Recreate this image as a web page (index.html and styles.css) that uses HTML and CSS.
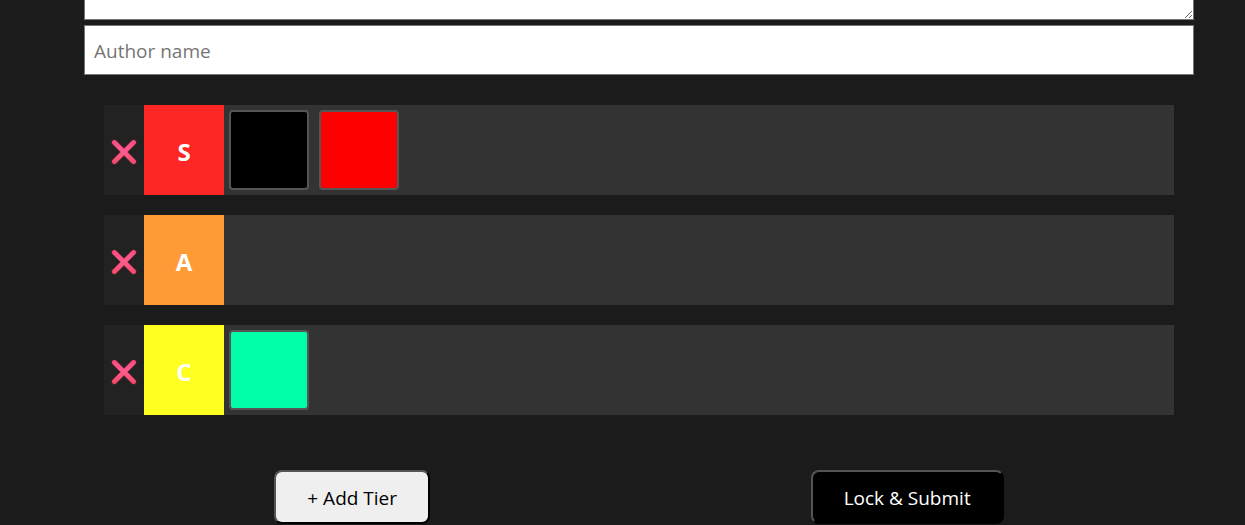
FILE: index.html
```html
<!DOCTYPE html>
<html lang="en">
<head>
<meta charset="utf-8">
<meta name="viewport" content="width=device-width, initial-scale=1">
<title>Tier list</title>
<link rel="stylesheet" href="styles.css">
</head>
<body>
<svg class="defs" aria-hidden="true">
  <defs>
    <linearGradient id="cross-fill" gradientUnits="userSpaceOnUse" x1="0" y1="0" x2="0" y2="26">
      <stop offset="0" stop-color="#f8497f"/>
      <stop offset="0.5" stop-color="#ff5c8d"/>
      <stop offset="1" stop-color="#f04860"/>
    </linearGradient>
    <symbol id="cross" viewBox="0 0 26 26">
      <path d="M3.4 3.4 22.6 22.6M22.6 3.4 3.4 22.6" fill="none" stroke="#c93a5e" stroke-width="5.2" stroke-linecap="round"/>
      <path d="M3.4 3.4 22.6 22.6M22.6 3.4 3.4 22.6" fill="none" stroke="url(#cross-fill)" stroke-width="4.2" stroke-linecap="round"/>
    </symbol>
  </defs>
</svg>
<main class="page">
  <form class="form">
    <textarea class="field description" aria-label="Description"></textarea>
    <input class="field author" type="text" placeholder="Author name" aria-label="Author name">
    <div class="tiers">
      <section class="tier">
        <button class="remove" type="button" aria-label="Remove tier S"><svg class="cross"><use href="#cross"/></svg></button>
        <div class="label label-s">S</div>
        <div class="items"><div class="item black"></div><div class="item red"></div></div>
      </section>
      <section class="tier">
        <button class="remove" type="button" aria-label="Remove tier A"><svg class="cross"><use href="#cross"/></svg></button>
        <div class="label label-a">A</div>
        <div class="items"></div>
      </section>
      <section class="tier">
        <button class="remove" type="button" aria-label="Remove tier C"><svg class="cross"><use href="#cross"/></svg></button>
        <div class="label label-c">C</div>
        <div class="items"><div class="item mint"></div></div>
      </section>
    </div>
    <div class="actions">
      <button class="btn btn-light" type="button">+ Add Tier</button>
      <button class="btn btn-dark" type="button">Lock &amp; Submit</button>
    </div>
  </form>
</main>
</body>
</html>
```
FILE: styles.css
```css
* {
  box-sizing: border-box;
}

body {
  margin: 0;
  background: #1b1b1b;
  color: #fff;
  font-family: "Segoe UI", "Open Sans", "Noto Sans", sans-serif;
}

.defs {
  display: block;
  width: 0;
  height: 0;
}

.page {
  padding: 0 51px 0 84px;
}

.form {
  display: flex;
  flex-direction: column;
}

.field {
  width: 100%;
  border: 1px solid #767676;
  border-radius: 0;
  background: #fff;
  color: #000;
  font: inherit;
  font-size: 19px;
}

.description {
  height: 20px;
  margin-bottom: 5px;
  border-top: 0;
  padding: 0;
  resize: vertical;
}

.author {
  height: 50px;
  padding: 2px 9px 0;
}

.author::placeholder {
  color: #757575;
}

.tiers {
  display: flex;
  flex-direction: column;
  gap: 20px;
  padding: 30px 20px 55px;
}

.tier {
  display: flex;
  min-height: 90px;
  background: #333;
}

.remove {
  display: flex;
  align-items: center;
  justify-content: center;
  width: 40px;
  padding: 4px 0 0;
  border: 0;
  background: #222;
  cursor: pointer;
}

.cross {
  width: 26px;
  height: 26px;
}

.label {
  display: flex;
  align-items: center;
  justify-content: center;
  width: 80px;
  padding-top: 2px;
  font-size: 24px;
  font-weight: 700;
}

.label-s {
  background: #ff2626;
}

.label-a {
  background: #ff9b37;
}

.label-c {
  background: #ffff20;
}

.items {
  display: flex;
  flex: 1;
  flex-wrap: wrap;
  gap: 10px;
  padding: 5px;
}

.item {
  width: 80px;
  height: 80px;
  border: 2px solid #555;
  border-radius: 4px;
}

.black {
  background: #000;
}

.red {
  background: #f00;
}

.mint {
  background: #00ffa8;
}

.actions {
  display: flex;
  justify-content: space-around;
}

.btn {
  height: 54px;
  padding: 2px 31px 0;
  border: 2px outset #000;
  border-radius: 8px;
  font: inherit;
  font-size: 19px;
  cursor: pointer;
}

.btn-light {
  background: #efefef;
  color: #000;
}

.btn-dark {
  background: #000;
  color: #fff;
}
```
